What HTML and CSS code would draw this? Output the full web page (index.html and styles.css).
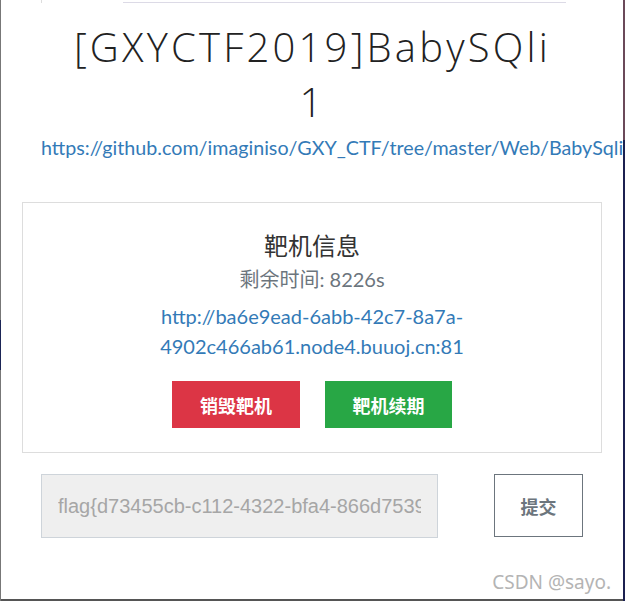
FILE: index.html
```html
<!DOCTYPE html>
<html lang="zh-CN">
<head>
<meta charset="utf-8">
<title>BabySQli</title>
<link rel="stylesheet" href="styles.css">
</head>
<body>
<div class="frame">
  <div class="tabs"><div class="tab-active"></div><div class="tab-rest"></div></div>
  <h1 class="title">[GXYCTF2019]BabySQli 1</h1>
  <a class="repo" href="#">https://github.com/imaginiso/GXY_CTF/tree/master/Web/BabySqli</a>
  <div class="card">
    <h3 class="card-title">靶机信息</h3>
    <div class="remain">剩余时间: 8226s</div>
    <a class="target" href="#">http://ba6e9ead-6abb-42c7-8a7a-4902c466ab61.node4.buuoj.cn:81</a>
    <div class="actions">
      <button class="btn btn-red">销毁靶机</button>
      <button class="btn btn-green">靶机续期</button>
    </div>
  </div>
  <div class="submit-row">
    <input class="flag" type="text" value="flag{d73455cb-c112-4322-bfa4-866d7539e2a1}" readonly>
    <button class="btn-submit">提交</button>
  </div>
  <div class="mark">CSDN @sayo.</div>
</div>
</body>
</html>
```

FILE: styles.css
```css
* { box-sizing: border-box; }
html, body { margin: 0; padding: 0; background: #fff; }
body { font-family: Lato, "Noto Sans CJK SC", sans-serif; color: #333; }

.frame {
  width: 625px;
  height: 601px;
  overflow: hidden;
  background:
    linear-gradient(to bottom, #777 0 320px, #1b2556 320px 370px, #777 370px) left top / 1px 100% no-repeat,
    linear-gradient(to bottom, #6b4a5a 0 140px, #1c2050 140px 100%) right top / 2px 100% no-repeat,
    linear-gradient(#555, #555) left bottom / 100% 2px no-repeat,
    #fff;
  display: flex;
  flex-direction: column;
}

.tabs { display: flex; margin-left: 41px; width: 525px; height: 3px; flex: none; }
.tab-active { width: 82px; border-left: 1px solid #ddd; }
.tab-rest { flex: 1; border-bottom: 1px solid #dcdae6; }

.title {
  margin: 16px auto 0;
  width: 490px;
  text-align: center;
  font-family: "Open Sans", Lato, sans-serif;
  font-weight: 300;
  font-size: 40px;
  line-height: 55px;
  letter-spacing: 3.2px;
  color: #222;
}

.repo {
  margin: 4px 0 0 41px;
  white-space: nowrap;
  font-size: 19.7px;
  line-height: 30px;
  color: #337ab7;
  text-decoration: none;
}

.card {
  margin: 39px 23px 0 22px;
  border: 1px solid #ddd;
  padding: 28px 20px 24px;
  display: flex;
  flex-direction: column;
  align-items: center;
  text-align: center;
}
.card-title { margin: 0; font-size: 24px; font-weight: 400; line-height: 30px; color: #333; }
.remain { margin-top: 3px; font-size: 20px; line-height: 30px; color: #6c757d; }
.target {
  margin-top: 7px;
  width: 330px;
  font-size: 20px;
  line-height: 30px;
  color: #337ab7;
  text-decoration: none;
}
.actions { margin-top: 20px; display: flex; gap: 25px; }
.btn {
  height: 47px;
  border: 0;
  color: #fff;
  font-family: "Noto Sans CJK SC", sans-serif;
  font-weight: 700;
  font-size: 18px;
  padding: 0;
}
.btn-red { width: 128px; background: #dc3545; }
.btn-green { width: 127px; background: #28a745; }

.submit-row { margin: 21px 0 0 41px; display: flex; gap: 56px; align-items: flex-start; }
.flag {
  width: 397px;
  height: 64px;
  background: #efefef;
  border: 1px solid #ced4da;
  padding: 0 16px;
  font-family: "Liberation Sans", Arial, sans-serif;
  font-size: 20px;
  color: #a6a6a6;
  outline: none;
}
.btn-submit {
  width: 89px;
  height: 63px;
  background: #fff;
  border: 1px solid #6c757d;
  color: #6c757d;
  font-family: "Noto Sans CJK SC", sans-serif;
  font-weight: 700;
  font-size: 18px;
  padding: 0;
}

.mark {
  margin-top: auto;
  margin-bottom: 7px;
  padding-right: 14px;
  text-align: right;
  font-family: "Noto Sans", sans-serif;
  font-size: 19px;
  line-height: 24px;
  color: #b4b4b4;
}
```
